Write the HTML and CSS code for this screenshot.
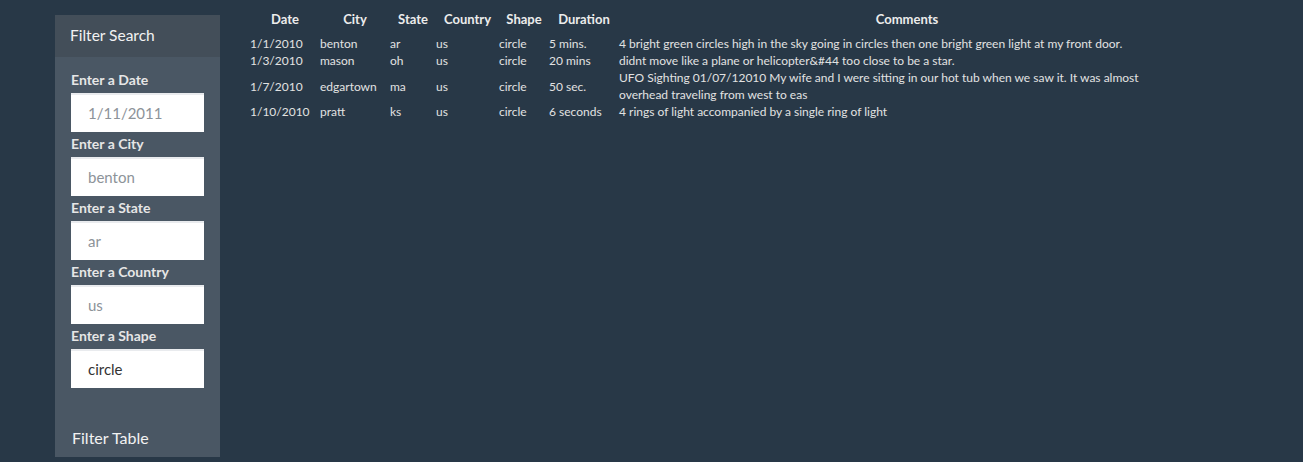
FILE: index.html
```html
<!DOCTYPE html>
<html lang="en">
<head>
<meta charset="utf-8">
<title>UFO Sightings</title>
<link rel="stylesheet" href="styles.css">
</head>
<body>
<div class="page">
  <aside class="panel">
    <div class="panel-heading">Filter Search</div>
    <form class="panel-body">
      <label class="field-label" for="datetime">Enter a Date</label>
      <input class="field" id="datetime" type="text" placeholder="1/11/2011">
      <label class="field-label" for="city">Enter a City</label>
      <input class="field" id="city" type="text" placeholder="benton">
      <label class="field-label" for="state">Enter a State</label>
      <input class="field" id="state" type="text" placeholder="ar">
      <label class="field-label" for="country">Enter a Country</label>
      <input class="field" id="country" type="text" placeholder="us">
      <label class="field-label" for="shape">Enter a Shape</label>
      <input class="field" id="shape" type="text" value="circle">
      <button class="filter-btn" type="button">Filter Table</button>
    </form>
  </aside>
  <main class="main">
    <table class="ufo-table">
      <colgroup>
        <col class="c-date"><col class="c-city"><col class="c-state"><col class="c-country"><col class="c-shape"><col class="c-duration"><col class="c-comments">
      </colgroup>
      <thead>
        <tr><th>Date</th><th>City</th><th>State</th><th>Country</th><th>Shape</th><th>Duration</th><th>Comments</th></tr>
      </thead>
      <tbody>
        <tr><td>1/1/2010</td><td>benton</td><td>ar</td><td>us</td><td>circle</td><td>5 mins.</td><td class="comment">4 bright green circles high in the sky going in circles then one bright green light at my front door.</td></tr>
        <tr><td>1/3/2010</td><td>mason</td><td>oh</td><td>us</td><td>circle</td><td>20 mins</td><td class="comment">didnt move like a plane or helicopter&amp;#44 too close to be a star.</td></tr>
        <tr><td>1/7/2010</td><td>edgartown</td><td>ma</td><td>us</td><td>circle</td><td>50 sec.</td><td class="comment">UFO Sighting 01/07/12010 My wife and I were sitting in our hot tub when we saw it. It was almost overhead traveling from west to eas</td></tr>
        <tr><td>1/10/2010</td><td>pratt</td><td>ks</td><td>us</td><td>circle</td><td>6 seconds</td><td class="comment">4 rings of light accompanied by a single ring of light</td></tr>
      </tbody>
    </table>
  </main>
</div>
</body>
</html>
```

FILE: styles.css
```css
html, body {
  margin: 0;
  padding: 0;
  background: #283847;
  font-family: Lato, "Noto Sans", sans-serif;
  color: #e4e4e4;
}

.page {
  display: flex;
  align-items: flex-start;
  padding-left: 55px;
  min-height: 462px;
  box-sizing: border-box;
}

.panel {
  width: 165px;
  margin-top: 15px;
  background: #4a5764;
  display: flex;
  flex-direction: column;
}

.panel-heading {
  background: #434e59;
  padding: 9px 15px 11px 15px;
  height: 22px;
  line-height: 22px;
  font-size: 15.5px;
  color: #f2f2f2;
}

.panel-body {
  display: flex;
  flex-direction: column;
  align-items: flex-start;
  padding: 14px 16px 9px 16px;
  margin: 0;
}

.field-label {
  font-size: 14px;
  font-weight: bold;
  line-height: 17px;
  height: 17px;
  margin-bottom: 5px;
  color: #e6e6e6;
}

.field {
  width: 133px;
  height: 39px;
  box-sizing: border-box;
  border: 0;
  border-top: 2px solid #e9ebee;
  background: #ffffff;
  padding: 0 0 2px 17px;
  margin: 0 0 3px 0;
  font-family: inherit;
  font-size: 15px;
  color: #333333;
  outline: none;
}

.field::placeholder {
  color: #8d9399;
  opacity: 1;
}

.filter-btn {
  margin-top: 37px;
  padding: 0 0 0 1px;
  background: transparent;
  border: 0;
  font-family: inherit;
  font-size: 16px;
  line-height: 20px;
  color: #f2f2f2;
  cursor: pointer;
}

.main {
  padding-top: 11px;
  margin-left: 30px;
}

.ufo-table {
  table-layout: fixed;
  width: 945px;
  border-collapse: collapse;
  border-spacing: 0;
  font-size: 12px;
  color: #e2e2e2;
}

.c-date { width: 70px; }
.c-city { width: 70px; }
.c-state { width: 46px; }
.c-country { width: 63px; }
.c-shape { width: 50px; }
.c-duration { width: 70px; }
.c-comments { width: 576px; }

.ufo-table th {
  font-size: 13px;
  font-weight: bold;
  line-height: 17px;
  padding: 0 0 7px 0;
  text-align: center;
  color: #ececec;
}

.ufo-table td {
  padding: 0;
  line-height: 17px;
  text-align: left;
  vertical-align: middle;
}

.ufo-table td.comment {
  padding-right: 32px;
}
```
